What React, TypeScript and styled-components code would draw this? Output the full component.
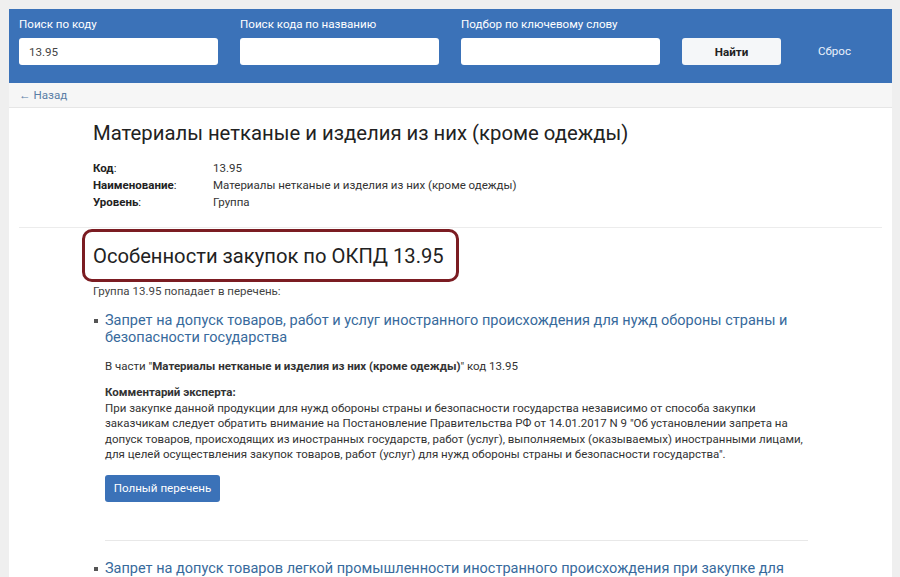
import styled, { createGlobalStyle } from "styled-components"

const GlobalStyle = createGlobalStyle`
  body {
    margin: 0;
    background: #efefef;
    font-family: Roboto, "Liberation Sans", Arial, sans-serif;
    color: #333333;
  }
`

const searchFields = [
  { label: "Поиск по коду", value: "13.95" },
  { label: "Поиск кода по названию", value: "" },
  { label: "Подбор по ключевому слову", value: "" },
]

const details = [
  { term: "Код", value: "13.95" },
  { term: "Наименование", value: "Материалы нетканые и изделия из них (кроме одежды)" },
  { term: "Уровень", value: "Группа" },
]

export default function App() {
  return (
    <>
      <GlobalStyle />
      <Page>
        <Panel>
          <SearchBar>
            {searchFields.map((field) => (
              <Field key={field.label}>
                <FieldLabel>{field.label}</FieldLabel>
                <Input defaultValue={field.value} />
              </Field>
            ))}
            <FindButton>Найти</FindButton>
            <ResetLink>Сброс</ResetLink>
          </SearchBar>

          <BackBar>
            <BackLink>← Назад</BackLink>
          </BackBar>

          <Content>
            <Column>
              <Title>Материалы нетканые и изделия из них (кроме одежды)</Title>
              <Details>
                {details.map((row) => (
                  <DetailRow key={row.term}>
                    <Term>
                      <b>{row.term}</b>:
                    </Term>
                    <span>{row.value}</span>
                  </DetailRow>
                ))}
              </Details>
            </Column>

            <Divider />

            <Column>
              <HighlightBox>
                <Subtitle>Особенности закупок по ОКПД 13.95</Subtitle>
              </HighlightBox>
              <Note>Группа 13.95 попадает в перечень:</Note>

              <List>
                <Item>
                  <Bullet />
                  <ItemBody>
                    <ItemLink>
                      Запрет на допуск товаров, работ и услуг иностранного происхождения для нужд
                      обороны страны и безопасности государства
                    </ItemLink>
                    <Part>
                      В части "<b>Материалы нетканые и изделия из них (кроме одежды)</b>" код 13.95
                    </Part>
                    <Comment>
                      <b>Комментарий эксперта:</b>
                      <br />
                      При закупке данной продукции для нужд обороны страны и безопасности государства
                      независимо от способа закупки заказчикам следует обратить внимание на
                      Постановление Правительства РФ от 14.01.2017 N 9 "Об установлении запрета на
                      допуск товаров, происходящих из иностранных государств, работ (услуг),
                      выполняемых (оказываемых) иностранными лицами, для целей осуществления закупок
                      товаров, работ (услуг) для нужд обороны страны и безопасности государства".
                    </Comment>
                    <ListButton>Полный перечень</ListButton>
                  </ItemBody>
                </Item>

                <ItemDivider />

                <Item>
                  <Bullet />
                  <ItemBody>
                    <ItemLink>
                      Запрет на допуск товаров легкой промышленности иностранного происхождения при
                      закупке для обеспечения федеральных нужд
                    </ItemLink>
                  </ItemBody>
                </Item>
              </List>
            </Column>
          </Content>
        </Panel>
      </Page>
    </>
  )
}

const Page = styled.div`
  padding: 9px 8px 0 9px;
  height: 577px;
  box-sizing: border-box;
  overflow: hidden;
`

const Panel = styled.div`
  width: 883px;
  background: #ffffff;
`

const SearchBar = styled.div`
  display: flex;
  align-items: flex-end;
  gap: 22px;
  padding: 8px 10px 18px;
  background: #3b72b8;
`

const Field = styled.label`
  display: flex;
  flex-direction: column;
  gap: 7px;
`

const FieldLabel = styled.span`
  font-size: 11.6px;
  line-height: 14px;
  color: #ffffff;
`

const Input = styled.input`
  width: 199px;
  height: 27px;
  box-sizing: border-box;
  padding: 0 10px;
  border: none;
  border-radius: 3px;
  background: #ffffff;
  font-family: inherit;
  font-size: 11.6px;
  color: #444444;
  outline: none;
`

const FindButton = styled.button`
  width: 99px;
  height: 27px;
  border: none;
  border-radius: 3px;
  background: #f5f7f9;
  font-family: inherit;
  font-size: 11.6px;
  font-weight: 700;
  color: #222222;
  cursor: pointer;
`

const ResetLink = styled.span`
  margin-left: 15px;
  font-size: 11.6px;
  line-height: 27px;
  color: #eaf1fb;
`

const BackBar = styled.div`
  height: 24px;
  padding: 0 10px;
  display: flex;
  align-items: center;
  background: #f6f6f6;
  border-bottom: 1px solid #e6e6e6;
`

const BackLink = styled.span`
  font-size: 11.6px;
  color: #5b7ea6;
`

const Content = styled.div`
  padding-top: 13px;
`

const Column = styled.div`
  width: 715px;
  margin-left: 84px;
`

const Title = styled.h1`
  margin: 0;
  font-size: 20.3px;
  font-weight: 400;
  line-height: 24px;
  color: #222222;
`

const Details = styled.div`
  margin-top: 15px;
  font-size: 11.5px;
  line-height: 17px;
  color: #333333;
`

const DetailRow = styled.div`
  display: grid;
  grid-template-columns: 120px 1fr;
`

const Term = styled.span`
  color: #222222;
`

const Divider = styled.hr`
  margin: 16px 10px 0;
  border: none;
  border-top: 1px solid #ececec;
`

const HighlightBox = styled.div`
  display: inline-block;
  margin: 1px 0 0 -11px;
  padding: 12px 12px 11px 8px;
  border: 3px solid #7b1c22;
  border-radius: 10px;
`

const Subtitle = styled.h2`
  margin: 0;
  font-size: 20.2px;
  font-weight: 400;
  line-height: 24px;
  color: #222222;
`

const Note = styled.div`
  margin-top: 2px;
  font-size: 11.5px;
  line-height: 15px;
  color: #444444;
`

const List = styled.div`
  margin-top: 13px;
`

const Item = styled.div`
  display: flex;
`

const Bullet = styled.span`
  flex: 0 0 12px;
  height: 18px;
  display: flex;
  align-items: center;

  &::after {
    content: "";
    width: 4px;
    height: 4px;
    margin-left: 1px;
    background: #555555;
  }
`

const ItemBody = styled.div`
  flex: 1;
`

const ItemLink = styled.a`
  display: block;
  font-size: 14.5px;
  line-height: 17px;
  color: #376a9c;
  text-decoration: none;
  cursor: pointer;
`

const Part = styled.div`
  margin-top: 12px;
  font-size: 11.5px;
  line-height: 16px;
  color: #333333;
`

const Comment = styled.div`
  margin-top: 11px;
  font-size: 11.5px;
  line-height: 15.6px;
  color: #333333;
`

const ListButton = styled.button`
  display: block;
  margin-top: 12px;
  width: 115px;
  height: 27px;
  border: none;
  border-radius: 3px;
  background: #3b72b8;
  font-family: inherit;
  font-size: 11.6px;
  color: #ffffff;
  cursor: pointer;
`

const ItemDivider = styled.hr`
  margin: 38px 0 19px 12px;
  border: none;
  border-top: 1px solid #e8e8e8;
`
